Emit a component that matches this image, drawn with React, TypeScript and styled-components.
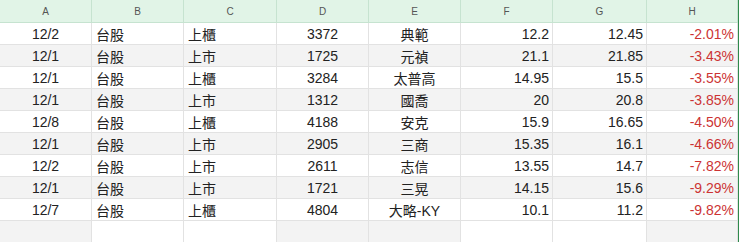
import React from 'react';
import styled, { createGlobalStyle } from 'styled-components';

const GlobalStyle = createGlobalStyle`
  html, body {
    margin: 0;
    padding: 0;
    background: #ffffff;
  }
  body {
    font-family: 'Liberation Sans', Arial, 'Noto Sans CJK TC', sans-serif;
  }
`;

type Align = 'left' | 'center' | 'right';

const Sheet = styled.div`
  display: grid;
  grid-template-columns: 92px 92px 93px 92px 92px 92px 94px 91px;
  grid-template-rows: 23px;
  grid-auto-rows: 22px;
  width: 738px;
  border-right: 1px solid #2f8a4c;
`;

const HeaderCell = styled.div`
  box-sizing: border-box;
  display: flex;
  align-items: center;
  justify-content: center;
  background: #e1f4e7;
  border-right: 1px solid #c6e3d0;
  border-bottom: 1px solid #c6e3d0;
  color: #555;
  font-size: 10px;
  padding-top: 1px;
`;

const Cell = styled.div<{ $align: Align; $shade: boolean; $red?: boolean }>`
  box-sizing: border-box;
  display: flex;
  align-items: center;
  justify-content: ${({ $align }) =>
    $align === 'left' ? 'flex-start' : $align === 'right' ? 'flex-end' : 'center'};
  padding: 0 ${({ $align }) => ($align === 'right' ? '3px' : '0')} 0
    ${({ $align }) => ($align === 'left' ? '4px' : '0')};
  background: ${({ $shade }) => ($shade ? '#f3f3f3' : '#ffffff')};
  border-right: 1px solid #e2e2e2;
  border-bottom: 1px solid #e2e2e2;
  color: ${({ $red }) => ($red ? '#cc3333' : '#222')};
  font-size: 14px;
  white-space: nowrap;
  overflow: hidden;
`;

const cols = ['A', 'B', 'C', 'D', 'E', 'F', 'G', 'H'];
const aligns: Align[] = ['center', 'left', 'left', 'center', 'center', 'right', 'right', 'right'];

const rows: string[][] = [
  ['12/2', '台股', '上櫃', '3372', '典範', '12.2', '12.45', '-2.01%'],
  ['12/1', '台股', '上市', '1725', '元禎', '21.1', '21.85', '-3.43%'],
  ['12/1', '台股', '上櫃', '3284', '太普高', '14.95', '15.5', '-3.55%'],
  ['12/1', '台股', '上市', '1312', '國喬', '20', '20.8', '-3.85%'],
  ['12/8', '台股', '上櫃', '4188', '安克', '15.9', '16.65', '-4.50%'],
  ['12/1', '台股', '上市', '2905', '三商', '15.35', '16.1', '-4.66%'],
  ['12/2', '台股', '上市', '2611', '志信', '13.55', '14.7', '-7.82%'],
  ['12/1', '台股', '上市', '1721', '三晃', '14.15', '15.6', '-9.29%'],
  ['12/7', '台股', '上櫃', '4804', '大略-KY', '10.1', '11.2', '-9.82%'],
];

// the empty last row only keeps the band in some columns
const lastShade = [true, false, false, true, true, false, false, true];

export default function App() {
  return (
    <>
      <GlobalStyle />
      <Sheet>
        {cols.map((c) => (
          <HeaderCell key={c}>{c}</HeaderCell>
        ))}
        {rows.map((r, i) =>
          r.map((v, j) => (
            <Cell key={`${i}-${j}`} $align={aligns[j]} $shade={i % 2 === 1} $red={j === 7}>
              {v}
            </Cell>
          ))
        )}
        {cols.map((c, j) => (
          <Cell key={`empty-${c}`} $align="center" $shade={lastShade[j]} />
        ))}
      </Sheet>
    </>
  );
}
